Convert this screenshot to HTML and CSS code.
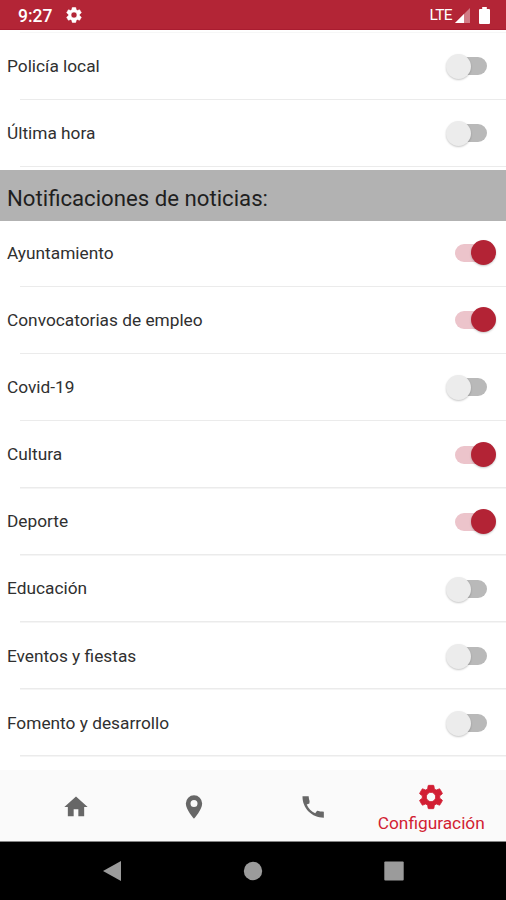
FILE: index.html
```html
<!DOCTYPE html>
<html lang="es">
<head>
<meta charset="utf-8">
<title>Configuración</title>
<link rel="stylesheet" href="styles.css">
</head>
<body>
<svg class="defs" aria-hidden="true">
  <symbol id="gear" viewBox="0 0 24 24"><path stroke="currentColor" stroke-width=".7" stroke-linejoin="round" fill-rule="evenodd" d="M19.43 12.98a7.8 7.8 0 0 0 0-1.96l2.11-1.65a.5.5 0 0 0 .12-.64l-2-3.46a.5.5 0 0 0-.61-.22l-2.49 1a7.3 7.3 0 0 0-1.69-.98l-.38-2.65A.49.49 0 0 0 14 2h-4a.49.49 0 0 0-.49.42l-.38 2.65c-.61.25-1.17.59-1.69.98l-2.49-1a.49.49 0 0 0-.61.22l-2 3.46a.49.49 0 0 0 .12.64l2.11 1.65a7.9 7.9 0 0 0 0 1.96l-2.11 1.65a.5.5 0 0 0-.12.64l2 3.46c.12.22.39.3.61.22l2.49-1c.52.4 1.08.73 1.69.98l.38 2.65c.03.24.24.42.49.42h4c.25 0 .46-.18.49-.42l.38-2.65c.61-.25 1.17-.59 1.69-.98l2.49 1c.23.09.49 0 .61-.22l2-3.46a.5.5 0 0 0-.12-.64zM12 16a4 4 0 1 1 0-8 4 4 0 0 1 0 8z"/></symbol>
</svg>
<div class="screen">
  <header class="status">
    <span class="time">9:27</span>
    <svg class="status-gear"><use href="#gear"/></svg>
    <span class="lte">LTE</span>
    <svg class="signal" viewBox="0 0 15 15"><path opacity=".4" d="M0 15 15 0V15z"/><path d="M0 15 9 6V15z"/></svg>
    <svg class="battery" viewBox="0 0 11 17"><path d="M3.2 0h4.6v2H10a1 1 0 0 1 1 1v13a1 1 0 0 1-1 1H1a1 1 0 0 1-1-1V3a1 1 0 0 1 1-1h2.2z"/></svg>
  </header>
  <main class="content">
    <ul class="list first">
      <li><span>Policía local</span><i class="switch"></i></li>
      <li><span>Última hora</span><i class="switch"></i></li>
    </ul>
    <h2><span>Notificaciones de noticias:</span></h2>
    <ul class="list">
      <li><span>Ayuntamiento</span><i class="switch on"></i></li>
      <li><span>Convocatorias de empleo</span><i class="switch on"></i></li>
      <li><span>Covid-19</span><i class="switch"></i></li>
      <li><span>Cultura</span><i class="switch on"></i></li>
      <li><span>Deporte</span><i class="switch on"></i></li>
      <li><span>Educación</span><i class="switch"></i></li>
      <li><span>Eventos y fiestas</span><i class="switch"></i></li>
      <li><span>Fomento y desarrollo</span><i class="switch"></i></li>
    </ul>
  </main>
  <nav class="tabs">
    <a><svg viewBox="0 0 24 24"><path d="M10 20v-6h4v6h5v-8h3L12 3 2 12h3v8z"/></svg></a>
    <a><svg viewBox="0 0 24 24"><path fill-rule="evenodd" d="M12 2a7 7 0 0 0-7 7c0 5.25 7 13 7 13s7-7.75 7-13a7 7 0 0 0-7-7zm0 10a3 3 0 1 1 0-6 3 3 0 0 1 0 6z"/></svg></a>
    <a><svg viewBox="0 0 24 24"><path d="M3 2.8h5.3c.1 1.6.3 2.8.8 4.1L8.9 9 6.6 9.8c1.4 3.2 4 6 7.3 7.6l1.6-2.1c1.6.5 3.7.7 5.8.7v5.2C11 21.2 2.8 13 3 2.8z"/></svg></a>
    <a class="active"><svg><use href="#gear"/></svg><span>Configuración</span></a>
  </nav>
  <footer class="system">
    <svg viewBox="0 0 20 22"><path d="M19 1v20L1 11z"/></svg>
    <svg class="home" viewBox="0 0 20 20"><circle cx="10" cy="10" r="9.2"/></svg>
    <svg viewBox="0 0 20 20"><rect x=".3" y=".5" width="19.4" height="19" rx="1"/></svg>
  </footer>
</div>
</body>
</html>
```
FILE: styles.css
```css
* { box-sizing: border-box; }
body { margin: 0; font-family: Roboto, sans-serif; color: #303030; background: #fff; }
.defs { position: absolute; width: 0; height: 0; }
.screen { width: 506px; height: 900px; display: flex; flex-direction: column; overflow: hidden; }
.status { height: 30px; flex: none; display: flex; align-items: center; background: #b32536; color: #fff; padding: 1px 16px 0 18px; border-bottom: 1px solid #a91c30; }
.status svg { fill: #fff; }
.time { width: 47px; font-size: 17.5px; font-weight: 500; line-height: 20px; padding-top: 1px; }
.status-gear { width: 18px; height: 18px; }
.lte { margin-left: auto; font-size: 15.5px; letter-spacing: -.6px; }
.signal { width: 15px; height: 15px; margin-left: 3px; }
.battery { width: 11px; height: 17px; margin-left: 9px; }
.content { height: 740px; flex: none; overflow: hidden; }
.list { list-style: none; margin: 0; padding: 0; }
.first { padding-top: 3px; margin-bottom: 2.5px; background: linear-gradient(#f7f7f7, #f7f7f7) 20px 2px / 486px 1px no-repeat; }
.list li { height: 67.1px; padding: 0 10px 0 7px; display: flex; align-items: center; justify-content: space-between; background: linear-gradient(#ebebeb, #ebebeb) 20px 100% / 486px 1.5px no-repeat; }
.list span { font-size: 17.3px; line-height: 24px; padding-bottom: 1.5px; }
.switch { position: relative; width: 50px; height: 26px; margin-bottom: 1px; }
.switch::before { content: ""; position: absolute; left: 9px; top: 4px; width: 32px; height: 18px; border-radius: 9px; background: #b9b9b9; }
.switch::after { content: ""; position: absolute; left: 0; top: 1px; width: 25px; height: 25px; border-radius: 50%; background: #ececec; box-shadow: 0 1px 2px rgba(0,0,0,.22); }
.switch.on::before { background: #ecc4cb; }
.switch.on::after { left: 25px; top: 0; background: #b32335; }
h2 { margin: 0; height: 51.5px; padding: 4px 7px 0; background: #b2b2b2; font-size: 22.2px; line-height: 48px; font-weight: 400; color: #1f1f1f; }
.first + h2 + .list { margin-top: -1px; }
.tabs { height: 72px; flex: none; display: flex; padding: 2px 15.5px 0 16.5px; background: #fafafa; border-bottom: 1px solid #858585; }
.tabs a { flex: 1; display: flex; flex-direction: column; align-items: center; justify-content: center; color: #676767; }
.tabs svg { width: 28px; height: 28px; fill: currentColor; }
.tabs .active { color: #d21e33; padding-top: 4px; }
.tabs .active span { font-size: 17.3px; line-height: 24px; }
.system { height: 58px; flex: none; display: flex; justify-content: space-between; align-items: center; padding: 0 102px; background: #000; }
.system svg { width: 20px; height: 22px; fill: #9b9b9b; }
.system .home { height: 20px; }
```
